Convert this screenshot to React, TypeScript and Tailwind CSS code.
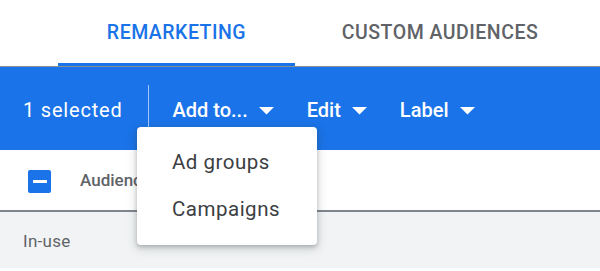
import React from "react";

function Caret() {
  return (
    <svg width="15" height="8" viewBox="0 0 15 8" className="ml-[11px] mt-[2px]">
      <path d="M0 0 L15 0 L7.5 7.5 Z" fill="white" />
    </svg>
  );
}

function ToolbarButton({ label, className = "" }: { label: string; className?: string }) {
  return (
    <button className={`flex items-center text-[20px] font-medium text-white ${className}`}>
      {label}
      <Caret />
    </button>
  );
}

export default function App() {
  return (
    <div className="h-[271px] w-[600px] overflow-hidden bg-white font-['Roboto',sans-serif]">
      {/* tabs */}
      <div className="flex h-[67px] border-b border-[#8a8f96] pl-[58px]">
        <div className="flex w-[237px] items-center justify-center border-b-[3px] border-[#1a73e8] pt-[3px] text-[19.5px] font-medium tracking-[0.5px] text-[#1a73e8]">
          REMARKETING
        </div>
        <div className="flex w-[290px] items-center justify-center text-[19.5px] font-medium tracking-[0.5px] text-[#5f6368]">
          CUSTOM AUDIENCES
        </div>
      </div>

      {/* selection toolbar */}
      <div className="relative flex h-[83px] items-center bg-[#1a73e8] pl-[23px] pt-[3px]">
        <span className="text-[20px] tracking-[0.8px] text-white">1 selected</span>
        <div className="ml-[25px] h-[50px] w-px bg-white/60" />
        <ToolbarButton label="Add to..." className="ml-[24px]" />
        <ToolbarButton label="Edit" className="ml-[33px]" />
        <ToolbarButton label="Label" className="ml-[33px]" />

        <div className="absolute left-[137px] top-[60px] z-10 w-[180px] rounded-[4px] bg-white py-[12px] shadow-[0_2px_4px_rgba(60,64,67,0.3),0_3px_10px_2px_rgba(60,64,67,0.15)]">
          <div className="flex h-[47px] items-center pl-[35px] text-[20.5px] tracking-[0.5px] text-[#3c4043]">
            Ad groups
          </div>
          <div className="flex h-[47px] items-center pl-[35px] text-[20.5px] tracking-[0.5px] text-[#3c4043]">
            Campaigns
          </div>
        </div>
      </div>

      {/* table header */}
      <div className="flex h-[62px] items-center border-b-2 border-[#80868b] pl-[28px]">
        <div className="mt-[2px] flex h-[23px] w-[23px] items-center justify-center rounded-[2px] bg-[#1a73e8]">
          <div className="h-[3px] w-[14px] bg-white" />
        </div>
        <span className="ml-[29px] mt-[2px] text-[17px] font-medium text-[#5f6368]">Audience</span>
      </div>

      {/* group row */}
      <div className="flex h-[56px] items-center bg-[#f1f3f4] pl-[23px] pt-[3px] text-[17px] tracking-[0.3px] text-[#5f6368]">
        In-use
      </div>
    </div>
  );
}
